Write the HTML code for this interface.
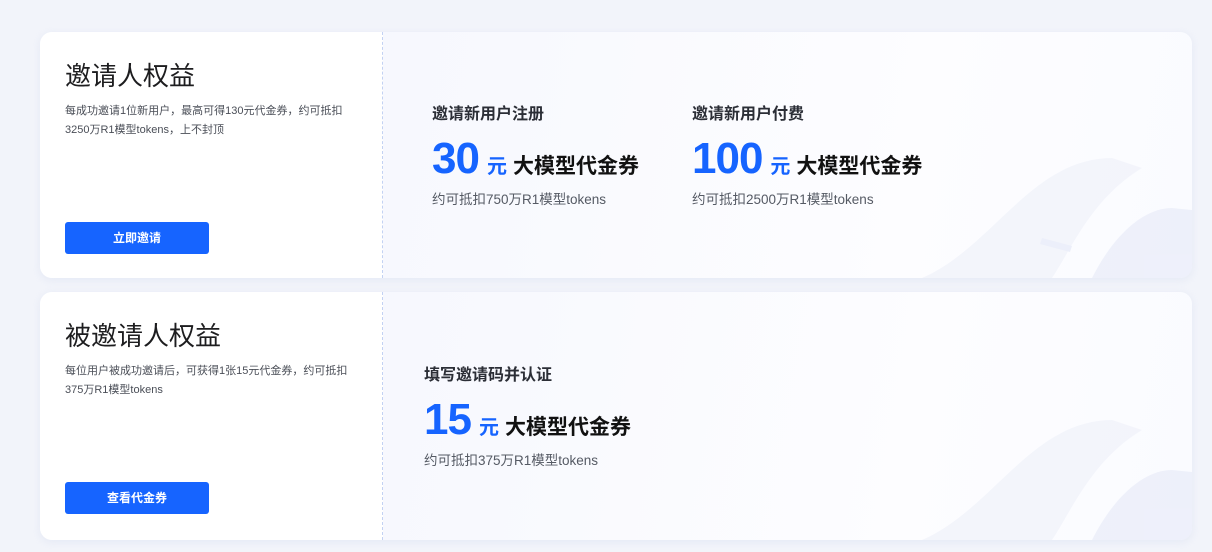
<!DOCTYPE html>
<html><head><meta charset="utf-8"><style>
*{margin:0;padding:0;box-sizing:border-box}
body{width:1212px;height:552px;background:#f2f4fa;font-family:"Liberation Sans","Noto Sans CJK SC",sans-serif;position:relative;overflow:hidden}
.card{position:absolute;left:40px;width:1152px;border-radius:12px;overflow:hidden;background:linear-gradient(100deg,#f3f6fe 0%,#f8f9fe 40%,#fdfdff 75%,#fafbff 100%);box-shadow:0 2px 8px rgba(200,210,235,.3)}
.left{position:absolute;left:0;top:0;bottom:0;width:343px;background:#fff;border-right:1px dashed #c3d2f3}
.t{position:absolute;left:25px;font-size:26px;color:#1d1d1f;font-weight:400}
.d{position:absolute;left:25px;width:300px;font-size:11px;line-height:19px;color:#4a4e57}
.btn{position:absolute;left:25px;width:144px;height:32px;background:#1664ff;border-radius:3px;color:#fff;font-size:12px;font-weight:bold;text-align:center;line-height:32px}
.it{position:absolute}
.it h4{font-size:16px;font-weight:bold;color:#2b2e36;line-height:22px}
.num{margin-top:8px;height:46px;display:flex;align-items:baseline;white-space:nowrap}
.num b{font-size:44px;color:#1664ff;font-weight:bold;letter-spacing:-1px}
.num i{font-style:normal;font-size:20px;color:#1664ff;font-weight:bold;margin:0 6px 0 8px}
.num span{font-size:21px;font-weight:bold;color:#111}
.it p{margin-top:8px;font-size:13.5px;color:#555a64}
.deco{position:absolute;right:0;bottom:0;width:280px;height:180px;opacity:.6}
</style></head><body>
<div class="card" style="top:32px;height:246px">
 <svg class="deco" viewBox="0 0 280 180"><path d="M10 180 C80 150 120 60 200 60 L230 70 C180 100 160 150 140 180Z" fill="#eef1fa"/><path d="M180 180 C200 140 230 110 260 110 L280 112 L280 180Z" fill="#e6eaf8"/><path d="M130 140 l30 8 l-2 6 l-30 -8z" fill="#e3e8f7"/></svg>
 <div class="left">
  <div class="t" style="top:24px">邀请人权益</div>
  <div class="d" style="top:70px">每成功邀请1位新用户，最高可得130元代金券，约可抵扣3250万R1模型tokens，上不封顶</div>
  <div class="btn" style="top:190px">立即邀请</div>
 </div>
 <div class="it" style="left:392px;top:72px"><h4>邀请新用户注册</h4><div class="num"><b>30</b><i>元</i><span>大模型代金券</span></div><p>约可抵扣750万R1模型tokens</p></div>
 <div class="it" style="left:652px;top:72px"><h4>邀请新用户付费</h4><div class="num"><b>100</b><i>元</i><span>大模型代金券</span></div><p>约可抵扣2500万R1模型tokens</p></div>
</div>
<div class="card" style="top:292px;height:248px">
 <svg class="deco" viewBox="0 0 280 180"><path d="M10 180 C80 150 120 60 200 60 L230 70 C180 100 160 150 140 180Z" fill="#eef1fa"/><path d="M180 180 C200 140 230 110 260 110 L280 112 L280 180Z" fill="#e6eaf8"/></svg>
 <div class="left">
  <div class="t" style="top:24px">被邀请人权益</div>
  <div class="d" style="top:70px">每位用户被成功邀请后，可获得1张15元代金券，约可抵扣375万R1模型tokens</div>
  <div class="btn" style="top:190px">查看代金券</div>
 </div>
 <div class="it" style="left:384px;top:73px"><h4>填写邀请码并认证</h4><div class="num"><b>15</b><i>元</i><span>大模型代金券</span></div><p>约可抵扣375万R1模型tokens</p></div>
</div>
</body></html>
